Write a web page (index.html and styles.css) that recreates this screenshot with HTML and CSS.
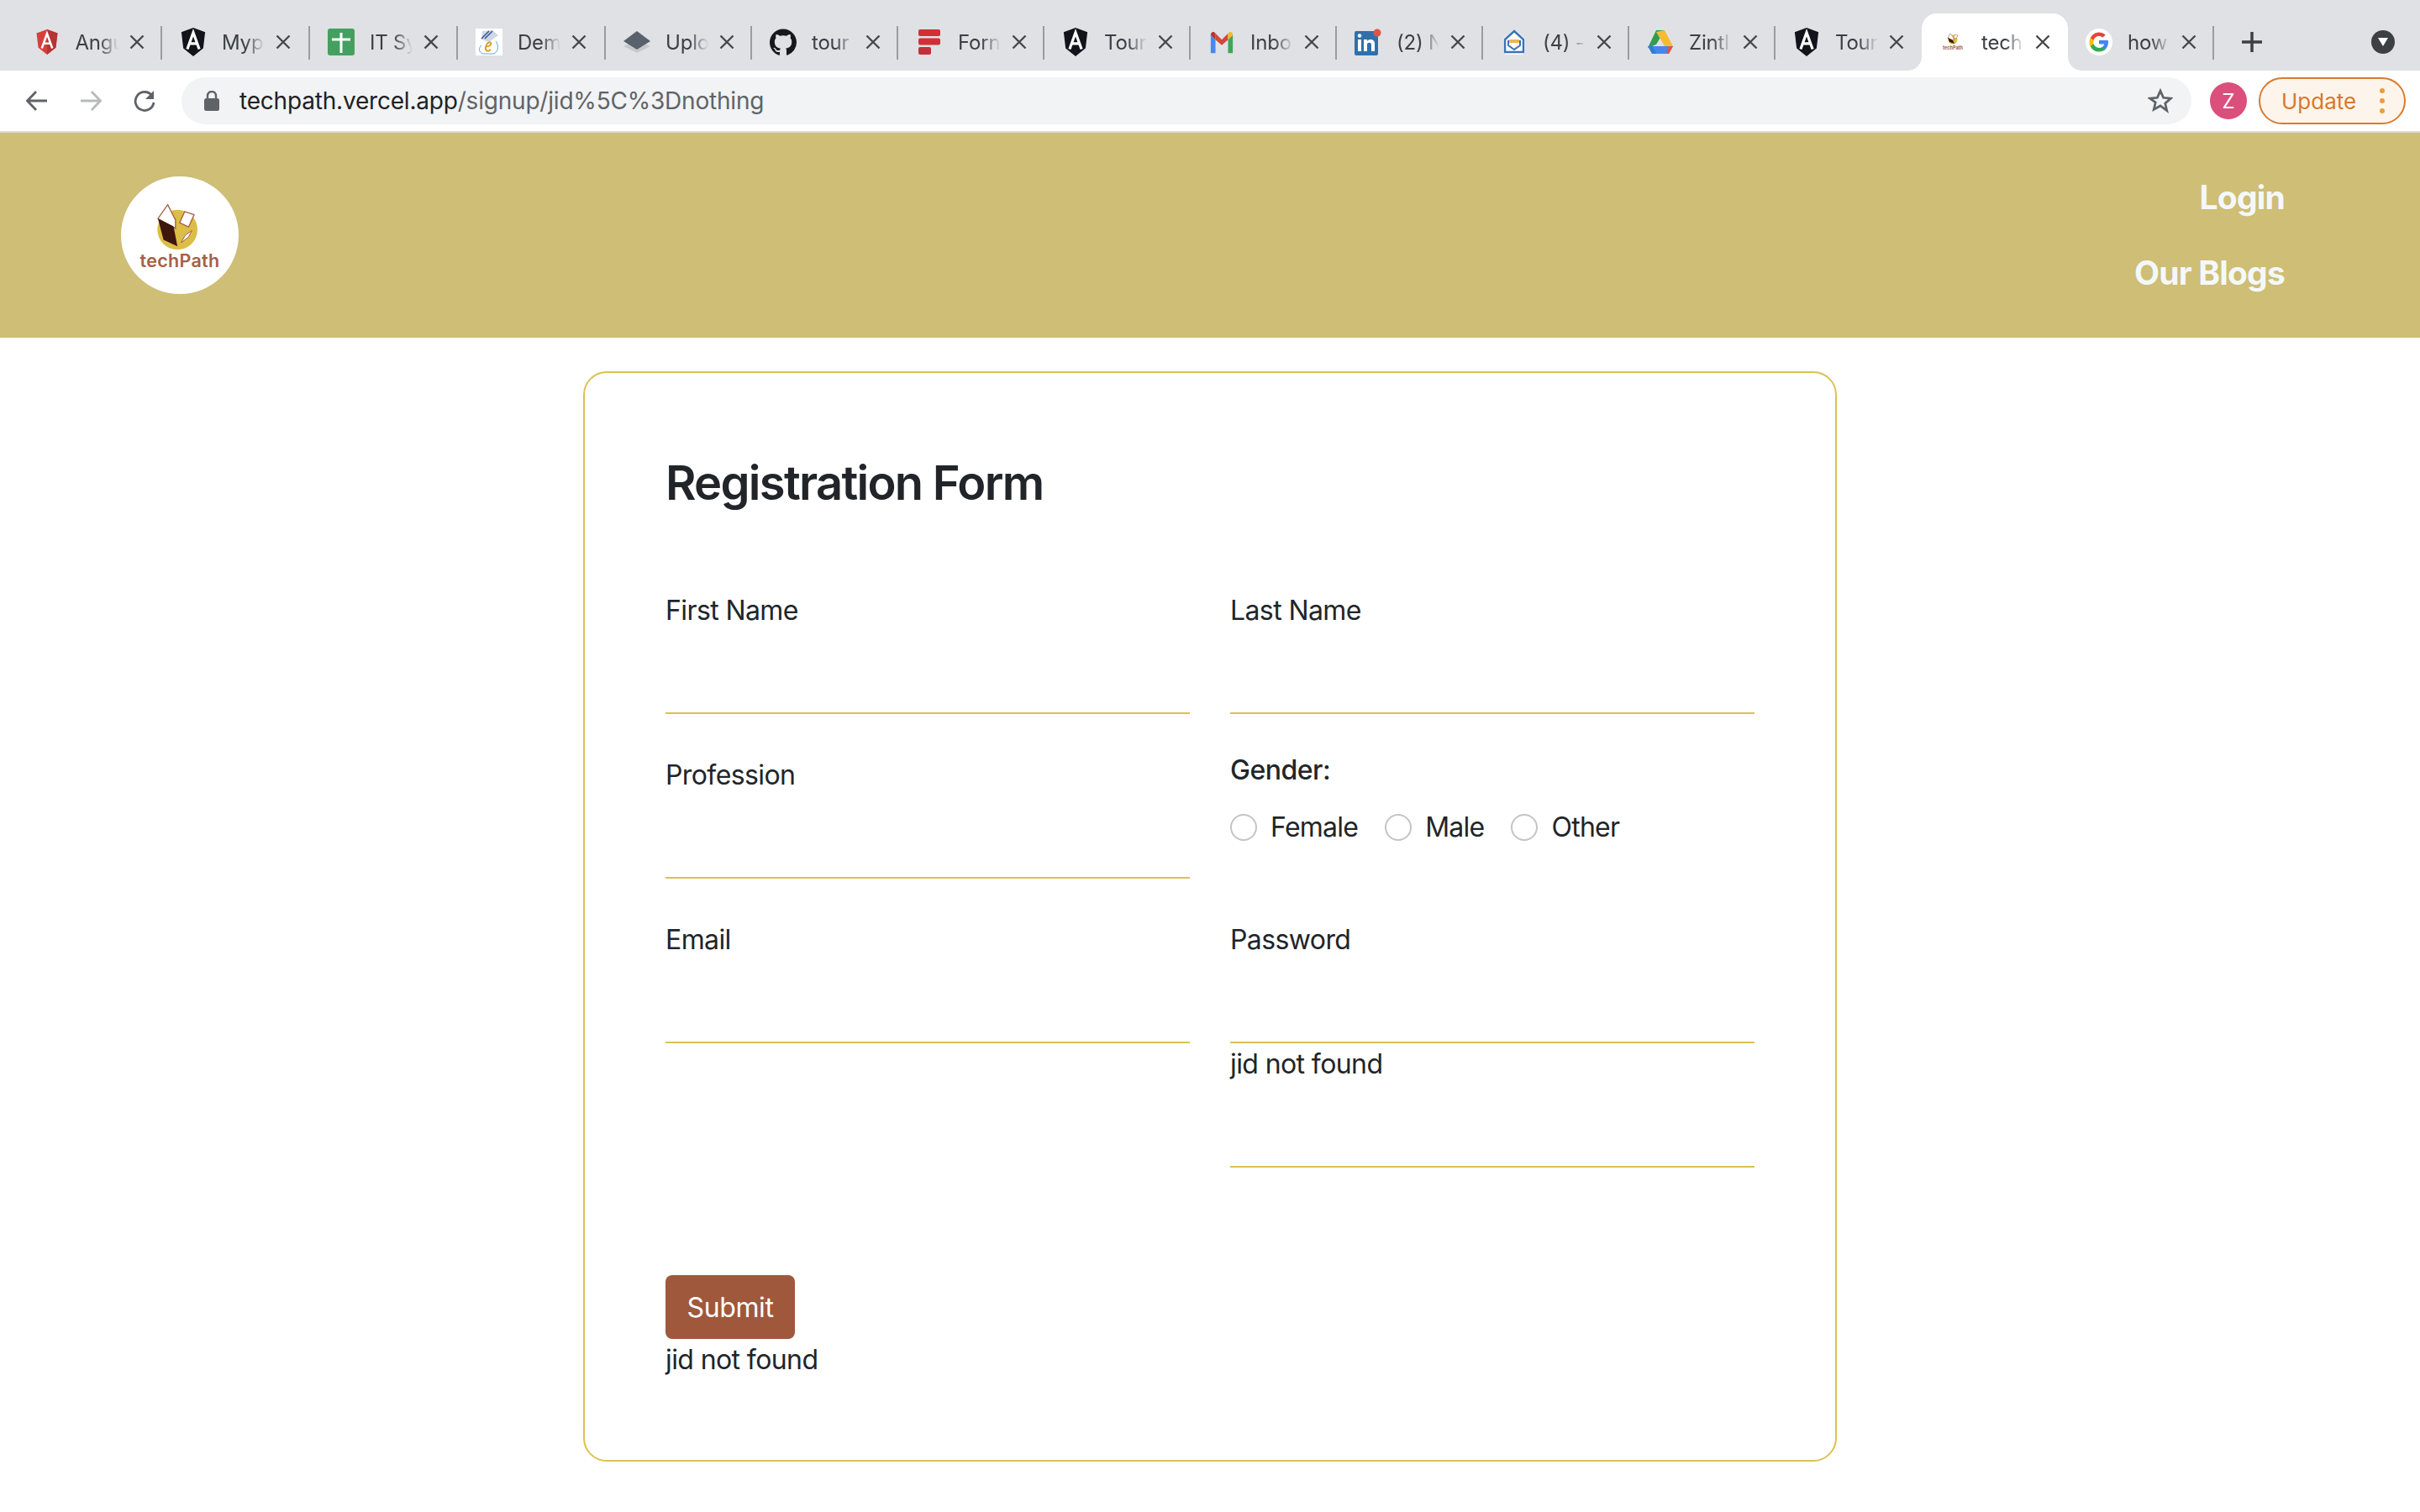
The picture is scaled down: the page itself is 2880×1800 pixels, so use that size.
FILE: index.html
```html
<!DOCTYPE html>
<html lang="en">
<head>
<meta charset="utf-8">
<title>techPath</title>
<link rel="stylesheet" href="styles.css">
</head>
<body>
<svg class="defs" width="0" height="0" aria-hidden="true">
  <symbol id="x" viewBox="0 0 24 24"><path d="M3.800 3.800 20.200 20.200M20.200 3.800 3.800 20.200" fill="none" stroke="#45474a" stroke-width="2.600"/></symbol>
  <symbol id="ng" viewBox="0 0 32 36"><path d="M16 0 1 5.500 3.500 26 16 36 28.500 26 31 5.500z" fill="#11141a"/><path d="M8.500 27 16 6 23.500 27M11 20h10" fill="none" stroke="#fff" stroke-width="3.400"/></symbol>
</svg>
<div class="chrome">
  <div class="tabstrip">
    <div class="tab sep"><span class="fav"><svg width="28" height="30" viewBox="0 0 32 36"><path d="M16 0 1 5.500 3.500 26 16 36 28.500 26 31 5.500z" fill="#d6403c"/><path d="M16 0v36l12.500-10L31 5.500z" fill="#b53434"/><path d="M8.500 27 16 6 23.500 27M11 20h10" fill="none" stroke="#fff" stroke-width="3"/></svg></span><span class="ttl">Angu</span><svg class="close"><use href="#x"/></svg></div>
    <div class="tab wide sep"><span class="fav"><svg width="32" height="34"><use href="#ng"/></svg></span><span class="ttl">Myp</span><svg class="close"><use href="#x"/></svg></div>
    <div class="tab wide sep"><span class="fav"><svg width="32" height="32" viewBox="0 0 32 32"><rect width="32" height="32" rx="3" fill="#459f5f"/><path d="M16 5v24M5 13h22" stroke="#fff" stroke-width="3"/></svg></span><span class="ttl">IT Sy</span><svg class="close"><use href="#x"/></svg></div>
    <div class="tab wide sep"><span class="fav"><svg width="32" height="32" viewBox="0 0 32 32"><rect width="32" height="32" fill="#fff"/><path d="M8 3 20 2 27 8 16 16 7 13z" fill="#cfd6e6"/><path d="M7 12 16 3M20 3 11 12" stroke="#3b5690" stroke-width="1.500"/><path d="M24 15c4 5 3 14-3 15H9c-5-1-6-7-2-10" fill="none" stroke="#6aa2c9" stroke-width="1"/><path d="M12 21c3 1 7-1 6-4-1-2-5 0-6 5-1 5 3 6 6 3" fill="none" stroke="#dca328" stroke-width="2"/></svg></span><span class="ttl">Dem</span><svg class="close"><use href="#x"/></svg></div>
    <div class="tab sep"><span class="fav"><svg width="32" height="32" viewBox="0 0 32 32"><path d="M16 14 32 21 16 29 0 21z" fill="#c6c9cc"/><path d="M16 3 32 15 16 25 0 15z" fill="#59626c"/></svg></span><span class="ttl">Uplo</span><svg class="close"><use href="#x"/></svg></div>
    <div class="tab sep"><span class="fav"><svg width="33" height="33" viewBox="0 0 16 16"><path fill="#16181c" d="M8 0C3.580 0 0 3.580 0 8c0 3.540 2.290 6.530 5.470 7.590.4.070.55-.17.55-.38 0-.19-.01-.82-.01-1.490-2.010.37-2.530-.49-2.690-.94-.09-.23-.48-.94-.82-1.130-.28-.15-.68-.52-.01-.53.63-.01 1.080.58 1.230.82.72 1.210 1.870.87 2.330.66.07-.52.28-.87.51-1.070-1.780-.2-3.640-.89-3.640-3.950 0-.87.31-1.590.82-2.150-.08-.2-.36-1.020.08-2.120 0 0 .67-.21 2.200.82.64-.18 1.320-.27 2-.27s1.360.09 2 .27c1.530-1.040 2.200-.82 2.200-.82.44 1.100.16 1.920.08 2.120.51.560.82 1.270.82 2.150 0 3.070-1.870 3.750-3.650 3.950.29.250.54.730.54 1.480 0 1.070-.01 1.930-.01 2.200 0 .21.15.46.55.38A8.010 8.010 0 0 0 16 8c0-4.420-3.580-8-8-8z"/></svg></span><span class="ttl">tour</span><svg class="close"><use href="#x"/></svg></div>
    <div class="tab sep"><span class="fav"><svg width="32" height="32" viewBox="0 0 32 32"><rect x="3" y="1" width="26" height="8" rx="2" fill="#d12f35"/><rect x="3" y="11.500" width="26" height="8" rx="2" fill="#d12f35"/><rect x="3" y="22" width="15" height="9" rx="2" fill="#c43037"/></svg></span><span class="ttl">Forn</span><svg class="close"><use href="#x"/></svg></div>
    <div class="tab sep"><span class="fav"><svg width="32" height="34"><use href="#ng"/></svg></span><span class="ttl">Tour</span><svg class="close"><use href="#x"/></svg></div>
    <div class="tab sep"><span class="fav"><svg width="30" height="32" viewBox="0 0 32 32"><path d="M2 7v23h6V13z" fill="#4a88ec"/><path d="M24 13v17h6V7z" fill="#3fa65a"/><path d="M8 13 16 20 24 13V5L16 13 8 5z" fill="#d44638"/><path d="M2 7c0-4 4-5 6-2v8z" fill="#b3362b"/><path d="M24 5c2-3 6-2 6 2l-6 6z" fill="#f2bb2d"/></svg></span><span class="ttl">Inbo</span><svg class="close"><use href="#x"/></svg></div>
    <div class="tab sep"><span class="fav"><svg width="32" height="32" viewBox="0 0 32 32"><rect y="3" width="28" height="29" rx="2" fill="#2f70ac"/><path d="M4 13h4v14H4zM11 13h4v2c2-3 9-3 9 3v9h-4v-8c0-3-5-3-5 0v8h-4z" fill="#fff"/><circle cx="6" cy="8.500" r="2.300" fill="#fff"/><circle cx="27" cy="5" r="4.500" fill="#e0553f"/></svg></span><span class="ttl">(2) N</span><svg class="close"><use href="#x"/></svg></div>
    <div class="tab sep"><span class="fav"><svg width="32" height="32" viewBox="0 0 32 32"><path d="M16 1 29 12v17l-3 2H6l-3-2V12z" fill="#fff"/><path d="M16 3 27 13v15H5V13z" fill="none" stroke="#3a73b9" stroke-width="2.500"/><path d="M9 15h14v5l-7 5-7-5z" fill="none" stroke="#3a73b9" stroke-width="2"/><path d="M10 13h12v4H10z" fill="#edb845"/></svg></span><span class="ttl">(4) -</span><svg class="close"><use href="#x"/></svg></div>
    <div class="tab sep"><span class="fav"><svg width="32" height="32" viewBox="0 0 32 30"><path d="M11 1h10L11 18 1 22z" fill="#2f9d4f"/><path d="M21 1 31 20H21L11 3z" fill="#f3bd33"/><path d="M7 20h24l-5 9H6z" fill="#4a85ec"/><path d="M1 20h6l4 9H6z" fill="#2c7ed8"/><path d="M26 29l5-9h-5l-3 9z" fill="#de5246"/></svg></span><span class="ttl">Zintl</span><svg class="close"><use href="#x"/></svg></div>
    <div class="tab"><span class="fav"><svg width="32" height="34"><use href="#ng"/></svg></span><span class="ttl">Tour</span><svg class="close"><use href="#x"/></svg></div>
    <div class="tab active"><span class="fav"><svg width="24" height="22" viewBox="0 0 24 22"><circle cx="12" cy="8" r="5.500" fill="#dcbd45"/><path d="M9 1 13 6V9L6 6z" fill="#fff" stroke="#a65f45" stroke-width=".6"/><path d="M6 6 12 9 14 13 8 11z" fill="#3d170e"/><path d="M14 2 18 3 16 7 13 6z" fill="#fff" stroke="#a65f45" stroke-width=".6"/><text x="12" y="20" text-anchor="middle" class="favtext">techPath</text></svg></span><span class="ttl">tech</span><svg class="close"><use href="#x"/></svg></div>
    <div class="tab sep"><span class="fav"><svg width="32" height="32" viewBox="0 0 32 32"><circle cx="16" cy="16" r="16" fill="#fff"/><path d="M27 16.300c0-.9-.1-1.700-.2-2.400H16v4.600h6.200a5.300 5.300 0 0 1-2.300 3.500v2.800h3.700c2.100-2 3.400-4.900 3.400-8.500z" fill="#4285f4"/><path d="M16 27.500c3.100 0 5.700-1 7.600-2.800l-3.700-2.800c-1 .7-2.300 1.100-3.900 1.100-3 0-5.500-2-6.400-4.700H5.800v2.900A11.500 11.500 0 0 0 16 27.500z" fill="#34a853"/><path d="M9.600 18.300a7 7 0 0 1 0-4.500v-2.900H5.800a11.500 11.500 0 0 0 0 10.300z" fill="#fbbc05"/><path d="M16 9.100c1.700 0 3.200.6 4.400 1.700l3.300-3.300A11.500 11.500 0 0 0 5.800 10.900l3.800 2.900C10.500 11.100 13 9.100 16 9.100z" fill="#ea4335"/></svg></span><span class="ttl">how</span><svg class="close"><use href="#x"/></svg></div>
    <svg class="newtab" width="24" height="24" viewBox="0 0 24 24"><path d="M12 0v24M0 12h24" stroke="#3c4043" stroke-width="3.500"/></svg>
    <span class="tabmenu"><svg width="12" height="10" viewBox="0 0 12 10"><path d="M0 0h12L6 10z" fill="#fff"/></svg></span>
  </div>
  <div class="toolbar">
    <button class="navbtn"><svg width="28" height="28" viewBox="0 0 28 28"><path d="M26 14H3M13 3 2.500 14 13 25" fill="none" stroke="#5f6368" stroke-width="2.800"/></svg></button>
    <button class="navbtn"><svg width="28" height="28" viewBox="0 0 28 28"><path d="M2 14h23M15 3l10.500 11L15 25" fill="none" stroke="#b8babd" stroke-width="2.800"/></svg></button>
    <button class="navbtn"><svg width="28" height="28" viewBox="0 0 28 28"><path d="M23 8a11 11 0 1 0 2 8" fill="none" stroke="#5f6368" stroke-width="2.800"/><path d="M25 2v10H15z" fill="#5f6368"/></svg></button>
    <div class="omnibox">
      <svg class="lock" width="18" height="24" viewBox="0 0 18 24"><rect y="9" width="18" height="15" rx="2.500" fill="#5f6368"/><path d="M4 10V6a5 5 0 0 1 10 0v4" fill="none" stroke="#5f6368" stroke-width="2.400"/></svg>
      <span class="url"><span class="host">techpath.vercel.app</span>/signup/jid%5C%3Dnothing</span>
      <svg class="star" width="30" height="30" viewBox="0 0 24 24"><path d="M12 2.500l2.900 6.500 7 .7-5.300 4.700 1.600 6.900L12 16.800l-6.200 3.500 1.600-6.900L2.100 9.700l7-.7z" fill="none" stroke="#5f6368" stroke-width="2.200"/></svg>
    </div>
    <span class="avatar">Z</span>
    <div class="update"><span>Update</span><span class="dots"><i></i><i></i><i></i></span></div>
  </div>
</div>
<header class="site-header">
  <a class="logo">
    <svg class="logomark" width="53" height="57" viewBox="250 182 160 172"><circle cx="332" cy="280" r="72" fill="#dcbd45"/><path d="M297 190 325 245 325 275 262 240z" fill="#fff" stroke="#a65f45" stroke-width="4"/><path d="M262 240 318 268 332 340 282 316z" fill="#3d170e"/><path d="M358 215 392 226 372 270 340 255z" fill="#fff" stroke="#a65f45" stroke-width="4"/><path d="M384 283 372 306 345 327 360 300z" fill="#fff" stroke="#a65f45" stroke-width="3"/></svg>
    <span class="logotext">techPath</span>
  </a>
  <nav class="site-nav">
    <a>Login</a>
    <a>Our Blogs</a>
  </nav>
</header>
<main class="card">
  <h1 class="title">Registration Form</h1>
  <form class="form">
    <div class="field"><label>First Name</label><input type="text"></div>
    <div class="field"><label>Last Name</label><input type="text"></div>
    <div class="field"><label>Profession</label><input type="text"></div>
    <div class="gender">
      <div class="gender-label">Gender:</div>
      <div class="radios">
        <label class="radio"><input type="radio" name="g">Female</label>
        <label class="radio"><input type="radio" name="g">Male</label>
        <label class="radio"><input type="radio" name="g">Other</label>
      </div>
    </div>
    <div class="field"><label>Email</label><input type="text"></div>
    <div class="field"><label>Password</label><input type="text"><div class="msg">jid not found</div><input type="text"></div>
  </form>
  <button class="submit" type="button">Submit</button>
  <div class="msg">jid not found</div>
</main>
</body>
</html>
```
FILE: styles.css
```css
* { box-sizing: border-box; }
html, body { margin: 0; padding: 0; background: #fff; }
body { font-family: Inter, "Liberation Sans", sans-serif; color: #212529; height: 1800px; overflow: hidden; }
.defs { position: absolute; }

.tabstrip { height: 84px; background: #dfe1e5; display: flex; padding-left: 18.500px; align-items: flex-end; position: relative; }
.tab { width: 174px; height: 68px; display: flex; align-items: center; padding: 0 0 0 21px; position: relative; flex: none; }
.tab:first-child { width: 174.500px; }
.tab.wide { width: 176px; }
.tab.sep::after { content: ""; position: absolute; right: 0; top: 15px; height: 40px; width: 2px; background: #9a9ca0; }
.tab.active { background: #fff; border-radius: 18px 18px 0 0; }
.tab.active::before, .tab.active::after { content: ""; position: absolute; bottom: 0; width: 16px; height: 16px; }
.tab.active::before { left: -16px; background: radial-gradient(circle at 0 0, transparent 15.500px, #fff 16px); }
.tab.active::after { right: -16px; background: radial-gradient(circle at 100% 0, transparent 15.500px, #fff 16px); }
.fav { width: 32px; height: 32px; display: flex; align-items: center; justify-content: center; flex: none; }
.favtext { font-size: 5.500px; font-weight: 700; fill: #a65f45; }
.ttl { width: 51px; margin-left: 18px; flex: none; white-space: nowrap; font-size: 24px; color: #3c4043; letter-spacing: -.2px;
  -webkit-mask-image: linear-gradient(to right, #000 55%, transparent 100%); mask-image: linear-gradient(to right, #000 55%, transparent 100%); }
.close { width: 22px; height: 22px; margin-left: 11px; flex: none; }
.newtab { margin-left: 33px; margin-bottom: 22px; flex: none; }
.tabmenu { width: 28px; height: 28px; border-radius: 50%; background: #3c4043; display: flex; align-items: center; justify-content: center; margin-left: auto; margin-right: 30px; margin-bottom: 20px; }

.toolbar { height: 74px; background: #fff; border-bottom: 2px solid #dadce0; display: flex; align-items: center; padding: 0 17px 0 26px; }
.navbtn { width: 36px; height: 36px; padding: 0; margin-right: 28px; border: 0; background: none; display: flex; align-items: center; justify-content: center; flex: none; }
.navbtn:nth-child(3) { margin-right: 26px; }
.omnibox { width: 2392px; height: 56px; border-radius: 28px; background: #f1f3f4; display: flex; align-items: center; padding: 0 22px 0 27px; flex: none; }
.lock { flex: none; }
.url { margin-left: 24px; font-size: 28px; letter-spacing: -.2px; color: #5f6368; white-space: nowrap; flex: 1; }
.host { color: #202124; }
.avatar { width: 44px; height: 44px; border-radius: 50%; background: #db4f7d; color: #fff; font-size: 24px; display: flex; align-items: center; justify-content: center; margin-left: 22px; flex: none; }
.update { width: 175px; height: 56px; border: 2px solid #d97b2d; border-radius: 28px; background: #fdf5ec; margin-left: 14px; display: flex; align-items: center; padding-left: 25px; flex: none; color: #d9792b; font-size: 26px; }
.dots { display: flex; flex-direction: column; gap: 6px; margin-left: 28px; }
.dots i { width: 6px; height: 6px; border-radius: 50%; background: #eb9d3c; display: block; }

.site-header { height: 244px; background: #cebe76; display: flex; justify-content: space-between; align-items: center; padding: 0 161px 0 144px; }
.logo { width: 140px; height: 140px; border-radius: 50%; background: #fff; display: flex; flex-direction: column; align-items: center; padding-top: 31px; }
.logomark { margin-right: 8px; flex: none; }
.logotext { font-weight: 600; font-size: 21.500px; line-height: 24px; color: #a65f45; letter-spacing: .3px; }
.site-nav { display: flex; flex-direction: column; align-items: flex-end; gap: 36px; }
.site-nav a { color: #f4f8fc; font-weight: 700; font-size: 39px; line-height: 54px; letter-spacing: -.8px; }

.card { width: 1492px; height: 1298px; margin: 40px auto 0; border: 2px solid #dcc154; border-radius: 28px; padding: 96px 96px 0; }
.title { margin: 0 0 92px; font-size: 56px; line-height: 70px; font-weight: 600; letter-spacing: -1.700px; }
.form { display: grid; grid-template-columns: 624px 624px; column-gap: 48px; row-gap: 48px; align-items: start; }
.field { display: flex; flex-direction: column; }
.field label, .msg { font-size: 32px; line-height: 50px; display: block; letter-spacing: -.6px; }
.field input { height: 98px; border: 0; border-bottom: 2px solid #dcc154; outline: 0; background: none; width: 100%; padding: 0; }
.gender-label { font-size: 32px; line-height: 38px; font-weight: 500; letter-spacing: -.5px; }
.radios { display: flex; gap: 32px; margin-top: 33px; }
.radio { display: flex; align-items: center; gap: 16px; font-size: 32px; line-height: 32px; letter-spacing: -.75px; }
.radio input { appearance: none; -webkit-appearance: none; width: 32px; height: 32px; border-radius: 50%; border: 2px solid #c4c4c4; margin: 0; background: #fff; flex: none; }
.submit { display: block; margin-top: 128px; width: 154px; height: 76px; background: #9f583c; color: #fff; border: 0; border-radius: 8px; font-family: inherit; font-size: 32px; letter-spacing: -.4px; padding: 0; }
```
